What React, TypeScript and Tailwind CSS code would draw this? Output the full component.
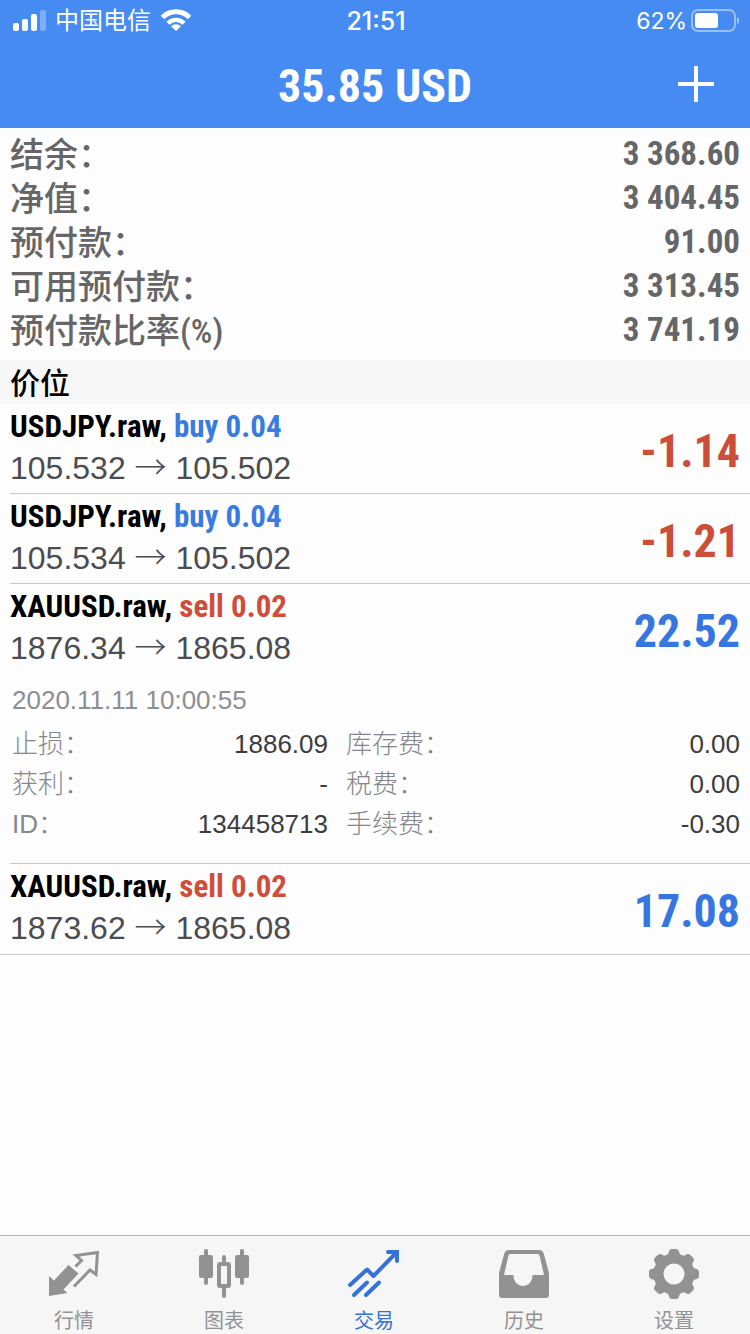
import type { ReactNode } from 'react'

type Side = 'buy' | 'sell'

interface Detail {
  label: string
  value: string
}

interface Position {
  id: number
  symbol: string
  side: Side
  volume: string
  open: string
  current: string
  profit: string
  time?: string
  details?: Detail[]
}

const CONDENSED = "font-['Roboto_Condensed','Noto_Sans_CJK_SC',sans-serif]"

const SUMMARY = [
  { label: '结余：', value: '3 368.60' },
  { label: '净值：', value: '3 404.45' },
  { label: '预付款：', value: '91.00' },
  { label: '可用预付款：', value: '3 313.45' },
  { label: '预付款比率(%)', value: '3 741.19' }
]

const POSITIONS: Position[] = [
  { id: 1, symbol: 'USDJPY.raw', side: 'buy', volume: '0.04', open: '105.532', current: '105.502', profit: '-1.14' },
  { id: 2, symbol: 'USDJPY.raw', side: 'buy', volume: '0.04', open: '105.534', current: '105.502', profit: '-1.21' },
  {
    id: 3,
    symbol: 'XAUUSD.raw',
    side: 'sell',
    volume: '0.02',
    open: '1876.34',
    current: '1865.08',
    profit: '22.52',
    time: '2020.11.11 10:00:55',
    details: [
      { label: '止损：', value: '1886.09' },
      { label: '库存费：', value: '0.00' },
      { label: '获利：', value: '-' },
      { label: '税费：', value: '0.00' },
      { label: 'ID：', value: '134458713' },
      { label: '手续费：', value: '-0.30' }
    ]
  },
  { id: 4, symbol: 'XAUUSD.raw', side: 'sell', volume: '0.02', open: '1873.62', current: '1865.08', profit: '17.08' }
]

export default function App() {
  return (
    <div className="min-h-screen flex flex-col bg-[#fdfdfd] font-['Liberation_Sans','Noto_Sans_CJK_SC',sans-serif]">
      <header className="bg-[#458bf2] text-white">
        <StatusBar />
        <div className="grid grid-cols-[1fr_auto_1fr] items-center h-22">
          <h1 className={`col-start-2 pt-1 text-[46px] leading-[84px] font-bold ${CONDENSED}`}>35.85 USD</h1>
          <button aria-label="新订单" className="justify-self-end mr-9">
            <svg width="36" height="36" viewBox="0 0 36 36" stroke="currentColor" strokeWidth="4">
              <path d="M18 0v36M0 18h36" />
            </svg>
          </button>
        </div>
      </header>

      <main className="flex-1">
        <dl className="px-[10px] pt-1 pb-2 text-[#666]">
          {SUMMARY.map((row) => (
            <div key={row.label} className="flex items-center justify-between h-11">
              <dt className={`pt-0.5 text-[34px] leading-[44px] font-medium ${CONDENSED}`}>{row.label}</dt>
              <dd className={`text-[33px] leading-[44px] font-bold ${CONDENSED}`}>{row.value}</dd>
            </div>
          ))}
        </dl>

        <h2 className="h-11 px-[10px] bg-[#f6f6f6] border-b-4 border-[#fafafa] text-[30px] leading-[48px] font-medium text-black">
          价位
        </h2>

        <ul className="border-b border-[#c8c8c8]">
          {POSITIONS.map((position) => (
            <PositionRow key={position.id} position={position} />
          ))}
        </ul>
      </main>

      <nav className="flex h-[99px] border-t border-[#b2b2b2] bg-[#f6f6f6]">
        <Tab label="行情">
          <QuotesIcon />
        </Tab>
        <Tab label="图表">
          <ChartIcon />
        </Tab>
        <Tab label="交易" active>
          <TradeIcon />
        </Tab>
        <Tab label="历史">
          <HistoryIcon />
        </Tab>
        <Tab label="设置">
          <GearIcon />
        </Tab>
      </nav>
    </div>
  )
}

function StatusBar() {
  return (
    <div className="grid grid-cols-[1fr_auto_1fr] items-center h-10 pl-3 pr-[10px] text-[24px] leading-[42px]">
      <div className="flex items-center gap-2">
        <svg width="35" height="24" viewBox="0 0 35 24" fill="currentColor">
          <rect x="1" y="14" width="6" height="8" rx="2" />
          <rect x="10" y="10" width="6" height="12" rx="2" />
          <rect x="19" y="5" width="6" height="17" rx="2" />
          <rect x="28" y="1" width="6" height="21" rx="2" opacity="0.3" />
        </svg>
        <span>中国电信</span>
        <svg width="34" height="24" viewBox="0 0 34 24" fill="none" stroke="currentColor" strokeWidth="5">
          <path d="M3.500 8.500a19 19 0 0 1 27 0" />
          <path d="M9 14.200a11.300 11.300 0 0 1 16 0" strokeWidth="4.400" />
          <path d="M17 22l-5-4.700a7 7 0 0 1 10 0z" fill="currentColor" stroke="none" />
        </svg>
      </div>
      <time className="font-['Inter',sans-serif] text-[25px] font-medium">21:51</time>
      <div className="flex items-center justify-end gap-1">
        <span className="font-['Inter',sans-serif] text-[23px]">62%</span>
        <svg width="49" height="24" viewBox="0 0 49 24" fill="none">
          <rect x="1" y="1" width="43" height="21" rx="6" stroke="#fff" strokeWidth="2" opacity="0.45" />
          <rect x="4" y="4" width="23" height="15" rx="3" fill="#fff" />
          <path d="M46 8c3 1 3 6 0 7z" fill="#fff" opacity="0.5" />
        </svg>
      </div>
    </div>
  )
}

function PositionRow({ position }: { position: Position }) {
  const { symbol, side, volume, open, current, profit, time, details } = position

  return (
    <li className="ml-[10px] pr-[10px] border-b border-[#c8c8c8] last:border-transparent">
      <div className="flex items-center justify-between h-[89px]">
        <div className="pb-1">
          <div className={`text-[31px] leading-[40px] font-bold text-black ${CONDENSED}`}>
            {symbol},{' '}
            <span className={side === 'buy' ? 'text-[#3a7be0]' : 'text-[#cf4d3a]'}>
              {side} {volume}
            </span>
          </div>
          <div className="text-[32px] leading-[36px] text-[#4c4c50]">
            {open} <span className="font-['Noto_Sans_CJK_SC',sans-serif] font-light">→</span> {current}
          </div>
        </div>
        <div
          className={`pt-1 text-[46px] leading-[56px] font-bold ${CONDENSED} ${
            profit.startsWith('-') ? 'text-[#cc4e38]' : 'text-[#3676e0]'
          }`}
        >
          {profit}
        </div>
      </div>

      {details && (
        <div className="pt-[7px] pb-[19px] text-[26px] leading-[40px]">
          <div className="pl-0.5 pb-1 text-[#8e8e93]">{time}</div>
          <dl className="grid grid-cols-[318px_1fr] gap-x-4">
            {details.map((detail) => (
              <div key={detail.label} className="flex justify-between h-10 pl-0.5">
                <dt className="text-[#86868b] font-light">{detail.label}</dt>
                <dd className="text-[#3c3c40]">{detail.value}</dd>
              </div>
            ))}
          </dl>
        </div>
      )}
    </li>
  )
}

function Tab({ label, active, children }: { label: string; active?: boolean; children: ReactNode }) {
  return (
    <button
      aria-current={active ? 'page' : undefined}
      className={`flex-1 flex flex-col items-center pt-3 pr-0.5 ${active ? 'text-[#3472d8]' : 'text-[#929292]'}`}
    >
      <span className="shrink-0">{children}</span>
      <span className="mt-[9px] text-[20px] leading-[24px]">{label}</span>
    </button>
  )
}

function QuotesIcon() {
  return (
    <svg width="52" height="52" viewBox="0 0 52 52" fill="none">
      <path d="M1 28 6 32.500 20.500 17 30.500 25.500 15.500 41.500 19.500 45 1 48z" fill="currentColor" />
      <path
        d="M27.500 18.500 33.500 12.500 28 7.500 49.500 4.500 48 26.500 42 22 26 38.500"
        stroke="currentColor"
        strokeWidth="3"
      />
    </svg>
  )
}

function ChartIcon() {
  return (
    <svg width="52" height="52" viewBox="0 0 52 52" fill="currentColor">
      <rect x="6" y="1" width="4" height="36" rx="2" />
      <rect x="1" y="7" width="14" height="23" rx="2" />
      <rect x="42" y="1" width="4" height="36" rx="2" />
      <rect x="37" y="7" width="14" height="23" rx="2" />
      <rect x="24" y="7" width="4" height="10" rx="2" />
      <rect x="24" y="36" width="4" height="14" rx="2" />
      <rect x="21" y="16" width="10" height="22" rx="1" fill="none" stroke="currentColor" strokeWidth="4" />
    </svg>
  )
}

function TradeIcon() {
  return (
    <svg width="52" height="52" viewBox="0 0 52 52" fill="none" stroke="currentColor" strokeWidth="4">
      <path d="M2 37 19 21.500 25.500 28 48 5" strokeLinejoin="round" strokeLinecap="round" />
      <path d="M40 4h9v9" strokeLinecap="round" />
      <path d="M6 47 19 34.500M18 47 31 34.500" strokeLinecap="round" />
    </svg>
  )
}

function HistoryIcon() {
  return (
    <svg width="52" height="52" viewBox="0 0 52 52" fill="currentColor">
      <path
        fillRule="evenodd"
        d="M11 2h30c2.500 0 4 1.200 4.700 3.500L51 25v22c0 1.800-1.200 3-3 3H4c-1.800 0-3-1.200-3-3V25L6.300 5.500C7 3.200 8.500 2 11 2zM13 6c-1.500 0-2.300.6-2.700 2L6 27h9.500c0 7 4.500 11 9.500 11s9.500-4 9.500-11H46L41.700 8c-.4-1.400-1.200-2-2.700-2z"
      />
    </svg>
  )
}

function GearIcon() {
  return (
    <svg width="52" height="52" viewBox="0 0 52 52" fill="none">
      <circle cx="26" cy="26" r="15.500" stroke="currentColor" strokeWidth="10" />
      <g fill="currentColor">
        {[0, 45, 90, 135, 180, 225, 270, 315].map((angle) => (
          <path
            key={angle}
            d="M16.500 8.500c2.500-.5 3.500-1.500 4-3.500.6-2.500 1.500-4 3.500-4h4c2 0 2.900 1.500 3.500 4 .5 2 1.500 3 4 3.500z"
            transform={`rotate(${angle} 26 26)`}
          />
        ))}
      </g>
    </svg>
  )
}
